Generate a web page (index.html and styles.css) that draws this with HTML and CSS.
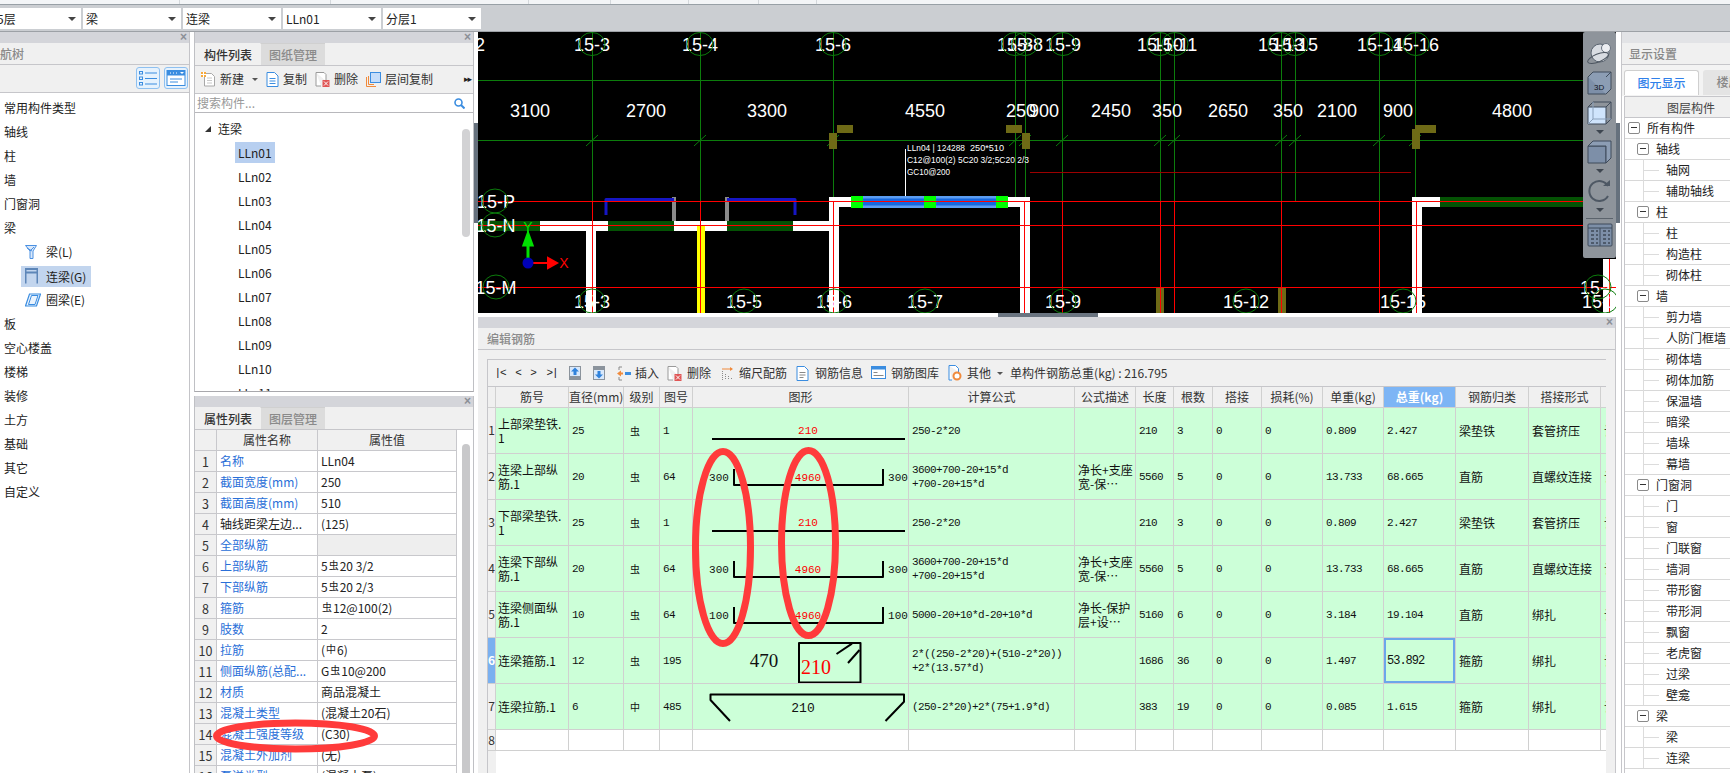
FILE: index.html
```html
<!DOCTYPE html>
<html lang="zh">
<head>
<meta charset="utf-8">
<title>编辑钢筋</title>
<link rel="stylesheet" href="styles.css">
</head>
<body>
<div class="app">
  <div class="topstrip"><i class="w180"></i><i class="w151"></i><i class="w198"></i><i class="w82"></i><i class="w78"></i><i class="w70"></i><i class="w58"></i></div>
  <div class="selbar">
    <div class="sel first"><span>5层</span></div>
    <div class="sel"><span>梁</span></div>
    <div class="sel"><span>连梁</span></div>
    <div class="sel"><span>LLn01</span></div>
    <div class="sel"><span>分层1</span></div>
  </div>
  <div class="main">
    <!-- 导航树 -->
    <section class="nav">
      <div class="phead"><span class="x">×</span></div>
      <div class="band navband">导航树</div>
      <div class="navtools">
        <span class="tbtn"><svg width="20" height="18" viewBox="0 0 20 18"><g fill="none" stroke="#3b8de0"><rect x="1.5" y="2.5" width="3" height="2.5"/><rect x="1.5" y="8" width="3" height="2.5"/><rect x="1.5" y="13.5" width="3" height="2.5"/><path d="M7 4h12M7 9.5h12M7 15h12"/></g></svg></span>
        <span class="tbtn"><svg width="20" height="18" viewBox="0 0 20 18"><rect x="1" y="1.5" width="18" height="15" fill="#fff" stroke="#3b8de0"/><rect x="1" y="1.5" width="18" height="5" fill="#3b8de0"/><path d="M4 4h1M7 4h1M10 4h1" stroke="#fff"/><path d="M14 3h4l-2 2z" fill="#fff"/><path d="M4 10h12M4 13h8" stroke="#3b8de0"/></svg></span>
      </div>
      <ul class="navlist">
        <li>常用构件类型</li>
        <li>轴线</li>
        <li>柱</li>
        <li>墙</li>
        <li>门窗洞</li>
        <li>梁</li>
        <li class="sub"><svg width="12" height="14" viewBox="0 0 12 14"><path d="M.5.5h11L8 6v7.500H5V6z" fill="#dbe9fa" stroke="#4a90e2"/><path d="M2 3l5 3M9 2L5 6" stroke="#4a90e2"/></svg><span>梁(L)</span></li>
        <li class="sub on"><svg width="13" height="16" viewBox="0 0 13 16"><path d="M.5 15.500V1h12v14.500" fill="none" stroke="#5d86b8" stroke-width="2"/><path d="M1 4.500h11" stroke="#5d86b8" stroke-width="2"/></svg><span>连梁(G)</span></li>
        <li class="sub"><svg width="16" height="14" viewBox="0 0 16 14"><path d="M4.500 1H15.500L11.500 13H.5z" fill="#eaf3fd" stroke="#3b8de0" stroke-width="1.200"/><path d="M6.500 2.500h6.500L10 11.500H3.500z" fill="none" stroke="#3b8de0"/></svg><span>圈梁(E)</span></li>
        <li>板</li>
        <li>空心楼盖</li>
        <li>楼梯</li>
        <li>装修</li>
        <li>土方</li>
        <li>基础</li>
        <li>其它</li>
        <li>自定义</li>
      </ul>
    </section>

    <!-- 构件列表 + 属性列表 -->
    <section class="mid">
      <div class="midtop">
        <div class="phead"><span class="x">×</span></div>
        <div class="tabs"><span class="tab on">构件列表</span><span class="tab">图纸管理</span></div>
        <div class="midtools">
          <span class="ti"><svg width="15" height="15" viewBox="0 0 15 15"><path d="M3.500 1.500h7l3 3v9.500h-10z" fill="#fff" stroke="#a8a8a8"/><path d="M6 6h5M6 8.500h5M6 11h5" stroke="#c8c8c8"/><path d="M0 0h5v5H0z" fill="#f7a93c"/><path d="M2.500 0v5M0 2.500h5" stroke="#fff"/></svg><span>新建</span><b class="caret"></b></span>
          <span class="ti"><svg width="13" height="15" viewBox="0 0 13 15"><path d="M1 .5h7.500l3.500 3.500v10.500H1z" fill="#fff" stroke="#3b8de0"/><path d="M3.500 6.500h6M3.500 9h6M3.500 11.500h6" stroke="#3b8de0"/></svg><span>复制</span></span>
          <span class="ti"><svg width="15" height="15" viewBox="0 0 15 15"><path d="M1 .5h8l2 2V9M6 14H1V.5" fill="#fff" stroke="#9a9a9a"/><rect x="7.500" y="8" width="7" height="7" fill="#e05555"/><path d="M9 9.500l4 4M13 9.500l-4 4" stroke="#fff"/></svg><span>删除</span></span>
          <span class="ti"><svg width="15" height="15" viewBox="0 0 15 15"><path d="M.5 5v9.500H10" fill="none" stroke="#f08a3c"/><path d="M2.500 4v8.500H8" fill="none" stroke="#f08a3c"/><rect x="4.500" y=".5" width="10" height="10" fill="#c5ddfa" stroke="#3b8de0"/></svg><span>层间复制</span></span>
          <span class="more">▸▸</span>
        </div>
        <div class="search"><span>搜索构件...</span><svg width="11" height="11" viewBox="0 0 11 11"><circle cx="4.500" cy="4.500" r="3.500" fill="none" stroke="#3b8de0" stroke-width="1.600"/><path d="M7 7l3.500 3.500" stroke="#3b8de0" stroke-width="2"/></svg></div>
        <div class="tree">
          <div class="troot"><b class="tri"></b>连梁</div>
          <div class="tleaf"><span class="on">LLn01</span></div>
          <div class="tleaf"><span>LLn02</span></div>
          <div class="tleaf"><span>LLn03</span></div>
          <div class="tleaf"><span>LLn04</span></div>
          <div class="tleaf"><span>LLn05</span></div>
          <div class="tleaf"><span>LLn06</span></div>
          <div class="tleaf"><span>LLn07</span></div>
          <div class="tleaf"><span>LLn08</span></div>
          <div class="tleaf"><span>LLn09</span></div>
          <div class="tleaf"><span>LLn10</span></div>
          <div class="tleaf"><span>LLn11</span></div>
          <span class="vthumb treethumb"></span>
        </div>
      </div>
      <div class="midbot">
        <div class="phead"><span class="x">×</span></div>
        <div class="tabs"><span class="tab on">属性列表</span><span class="tab">图层管理</span></div>
        <div class="propwrap">
          <table class="prop">
            <colgroup><col class="c1"><col class="c2"><col class="c3"></colgroup>
            <thead><tr><th></th><th>属性名称</th><th>属性值</th></tr></thead>
            <tbody>
              <tr><th>1</th><td class="bl">名称</td><td>LLn04</td></tr>
              <tr><th>2</th><td class="bl">截面宽度(mm)</td><td>250</td></tr>
              <tr><th>3</th><td class="bl">截面高度(mm)</td><td>510</td></tr>
              <tr><th>4</th><td>轴线距梁左边...</td><td>(125)</td></tr>
              <tr><th>5</th><td class="bl">全部纵筋</td><td class="gr"></td></tr>
              <tr><th>6</th><td class="bl">上部纵筋</td><td>5<span class="g">虫</span>20 3/2</td></tr>
              <tr><th>7</th><td class="bl">下部纵筋</td><td>5<span class="g">虫</span>20 2/3</td></tr>
              <tr><th>8</th><td class="bl">箍筋</td><td><span class="g">虫</span>12@100(2)</td></tr>
              <tr><th>9</th><td class="bl">肢数</td><td>2</td></tr>
              <tr><th>10</th><td class="bl">拉筋</td><td>(<span class="g">中</span>6)</td></tr>
              <tr><th>11</th><td class="bl">侧面纵筋(总配...</td><td>G<span class="g">虫</span>10@200</td></tr>
              <tr><th>12</th><td class="bl">材质</td><td>商品混凝土</td></tr>
              <tr><th>13</th><td class="bl">混凝土类型</td><td>(混凝土20石)</td></tr>
              <tr><th>14</th><td class="bl">混凝土强度等级</td><td>(C30)</td></tr>
              <tr><th>15</th><td class="bl">混凝土外加剂</td><td>(无)</td></tr>
              <tr><th>16</th><td class="bl">泵送类型</td><td>(混凝土泵)</td></tr>
            </tbody>
          </table>
          <div class="proptrack"><span class="vthumb"></span></div>
        </div>
      </div>
    </section>

    <div class="split"><span class="grip"></span></div>

    <!-- 绘图区 + 编辑钢筋 -->
    <section class="center">
      <div class="canvas">
        <svg class="cad" width="1138" height="281" viewBox="478 32 1138 281">
          <rect x="478" y="32" width="1138" height="281" fill="#000"/>
          <g class="gl">
            <path d="M478 80.500H1583M478 140.500H1583"/>
            <path d="M592.500 32V201M700.500 32V201M833.500 32V201M1015.500 32V200M1025.500 32V200M1062.500 32V201M1160.500 32V201M1174.500 32V201M1281.500 32V201M1295.500 32V201M1379.500 32V201M1415.500 32V201"/>
            <path d="M586 146l12-11M694 146l12-11M827 146l12-11M1009 146l12-11M1019 146l12-11M1056 146l12-11M1154 146l12-11M1168 146l12-11M1275 146l12-11M1289 146l12-11M1373 146l12-11M1409 146l12-11"/>
          </g>
          <g class="ol">
            <rect x="837" y="125" width="16" height="8"/><rect x="829" y="133" width="8" height="16"/>
            <rect x="1006" y="125" width="16" height="8"/><rect x="1022" y="133" width="8" height="16"/>
            <rect x="1415" y="125" width="21" height="8"/><rect x="1412" y="129" width="8" height="20"/>
            <rect x="1156" y="287" width="8" height="26"/><rect x="1278" y="287" width="8" height="26"/>
          </g>
          <g class="wh">
            <rect x="478" y="221" width="351" height="10"/>
            <rect x="586" y="231" width="10" height="82"/>
            <rect x="829" y="197" width="10" height="116"/>
            <rect x="829" y="197" width="201" height="10"/>
            <rect x="1020" y="197" width="10" height="116"/>
            <rect x="1412" y="197" width="10" height="116"/>
            <rect x="1412" y="197" width="28" height="10"/>
            <rect x="1603" y="259" width="13" height="54"/>
          </g>
          <g class="dg">
            <rect x="478" y="221" width="62" height="10"/>
            <rect x="608" y="221" width="66" height="10"/>
            <rect x="727" y="221" width="66" height="10"/>
            <rect x="1440" y="197" width="143" height="10"/>
          </g>
          <rect x="697" y="226" width="8" height="87" fill="#ff0"/>
          <g class="gy"><rect x="672" y="197" width="4" height="24"/><rect x="725" y="197" width="4" height="24"/></g>
          <g class="nv">
            <path d="M606 215V199.500H674"/>
            <path d="M727 199.500H795V215"/>
          </g>
          <rect x="851" y="196" width="157" height="12" fill="#5b9df2"/>
          <rect x="851" y="198.500" width="157" height="7" fill="#1668e0"/>
          <g class="gn"><rect x="851" y="196" width="12" height="12"/><rect x="924" y="196" width="12" height="12"/><rect x="996" y="196" width="12" height="12"/></g>
          <path d="M905.500 149V196" stroke="#fff" fill="none"/>
          <g class="rd">
            <path d="M478 201.500H1616M478 225.500H1616M478 287.500H1616"/>
            <path d="M592.500 201V313M700.500 201V313M833.500 201V313M1024.500 201V313M1062.500 201V313M1160.500 201V313M1174.500 201V313M1281.500 201V313M1379.500 201V313M1416.500 201V313M1609.500 259V313"/>
          </g>
          <path d="M1030 172.500H1411" stroke="#9c0000" fill="none"/>
          <g class="lb">
            <text x="907" y="151" textLength="58" lengthAdjust="spacingAndGlyphs">LLn04 | 124288</text>
            <text x="970" y="151" textLength="34" lengthAdjust="spacingAndGlyphs">250*510</text>
            <text x="907" y="163" textLength="122" lengthAdjust="spacingAndGlyphs">C12@100(2) 5C20 3/2;5C20 2/3</text>
            <text x="907" y="175" textLength="43" lengthAdjust="spacingAndGlyphs">GC10@200</text>
          </g>
          <g class="ax">
            <text x="485" y="51" text-anchor="end">15-2</text>
            <text x="592" y="51">15-3</text><text x="700" y="51">15-4</text><text x="833" y="51">15-6</text>
            <text x="1015" y="51">15-8</text><text x="1025" y="51">15-8</text><text x="1063" y="51">15-9</text>
            <text x="1160" y="51">15-10</text><text x="1175" y="51">15-11</text>
            <text x="1281" y="51">15-13</text><text x="1295" y="51">15-15</text>
            <text x="1380" y="51">15-14</text><text x="1416" y="51">15-16</text>
            <text x="530" y="117">3100</text><text x="646" y="117">2700</text><text x="767" y="117">3300</text><text x="925" y="117">4550</text>
            <text x="1021" y="117">250</text><text x="1044" y="117">900</text><text x="1111" y="117">2450</text><text x="1167" y="117">350</text>
            <text x="1228" y="117">2650</text><text x="1288" y="117">350</text><text x="1337" y="117">2100</text><text x="1398" y="117">900</text><text x="1512" y="117">4800</text>
            <text x="496" y="208">15-P</text><text x="496" y="232">15-N</text><text x="496" y="294">15-M</text>
            <text x="592" y="308">15-3</text><text x="744" y="308">15-5</text><text x="834" y="308">15-6</text><text x="925" y="308">15-7</text>
            <text x="1063" y="308">15-9</text><text x="1246" y="308">15-12</text><text x="1403" y="308">15-15</text>
            <text x="1598" y="294">15-L</text><text x="1605" y="308">15-16</text>
          </g>
          <g class="bb">
            <ellipse cx="592" cy="44" rx="13" ry="11.500"/><ellipse cx="700" cy="44" rx="13" ry="11.500"/><ellipse cx="833" cy="44" rx="13" ry="11.500"/>
            <ellipse cx="1015" cy="44" rx="13" ry="11.500"/><ellipse cx="1025" cy="44" rx="13" ry="11.500"/><ellipse cx="1063" cy="44" rx="13" ry="11.500"/>
            <ellipse cx="1160" cy="44" rx="13" ry="11.500"/><ellipse cx="1175" cy="44" rx="13" ry="11.500"/><ellipse cx="1281" cy="44" rx="13" ry="11.500"/>
            <ellipse cx="1295" cy="44" rx="13" ry="11.500"/><ellipse cx="1380" cy="44" rx="13" ry="11.500"/><ellipse cx="1416" cy="44" rx="13" ry="11.500"/>
            <ellipse cx="495" cy="201" rx="13" ry="12"/><ellipse cx="495" cy="225" rx="13" ry="12"/><ellipse cx="496" cy="287" rx="13" ry="12"/>
            <ellipse cx="592" cy="301" rx="13" ry="12"/><ellipse cx="744" cy="301" rx="13" ry="12"/><ellipse cx="834" cy="301" rx="13" ry="12"/><ellipse cx="925" cy="301" rx="13" ry="12"/>
            <ellipse cx="1063" cy="301" rx="13" ry="12"/><ellipse cx="1246" cy="301" rx="13" ry="12"/><ellipse cx="1403" cy="301" rx="13" ry="12"/>
            <ellipse cx="1598" cy="287" rx="13" ry="12"/><ellipse cx="1605" cy="301" rx="13" ry="12"/>
          </g>
          <path d="M528 263V245h-4l4-11 4 11h-4z" fill="#00e000" stroke="#00e000" stroke-width="3"/>
          <path d="M528 263h20v-5l9 5-9 5v-5z" fill="#f00" stroke="#f00" stroke-width="2"/>
          <circle cx="528" cy="263" r="5.500" fill="#0000b8"/>
          <text class="gy-l" x="528" y="232">Y</text>
          <text class="rx-l" x="564" y="268">X</text>
        </svg>
        <div class="viewbar">
          <svg width="26" height="24" viewBox="0 0 26 24"><ellipse cx="13" cy="12" rx="9" ry="9" fill="#d8dce2" stroke="#5a6470"/><circle cx="19" cy="7" r="4.500" fill="#eceef2" stroke="#6a7480"/><ellipse cx="11" cy="17" rx="11" ry="4" fill="none" stroke="#4c5560" transform="rotate(-22 11 17)"/></svg>
          <svg width="26" height="24" viewBox="0 0 26 24"><path d="M1 6h18v17H1z" fill="#7d8fa8" stroke="#3e4a5a"/><path d="M1 6l5-5h18v17l-5 5M19 6l5-5" fill="#8c9db4" stroke="#3e4a5a"/><text class="t3d" x="7" y="19">3D</text></svg>
          <svg width="26" height="24" viewBox="0 0 26 24"><path d="M1 6h18v17H1z" fill="#cfe4fc" stroke="#3e4a5a"/><path d="M1 6l5-5h18v17l-5 5M19 6l5-5" fill="none" stroke="#3e4a5a"/><path d="M6 1v17h18M6 18l-5 5" fill="none" stroke="#8aa0ba"/></svg>
          <b class="dn"></b>
          <svg width="26" height="24" viewBox="0 0 26 24"><path d="M1 6h18v17H1z" fill="#7d8fa8" stroke="#3e4a5a"/><path d="M1 6l5-5h18v17l-5 5V6z" fill="#8c9db4" stroke="#3e4a5a"/></svg>
          <b class="dn"></b>
          <svg width="26" height="24" viewBox="0 0 26 24"><path d="M21 17a10 10 0 1 1 0-10" fill="none" stroke="#4e5864" stroke-width="2"/><path d="M16 7h7V1z" fill="#4e5864"/></svg>
          <b class="dn"></b>
          <i class="vsep"></i>
          <svg width="26" height="24" viewBox="0 0 26 24"><rect x="1" y="1" width="24" height="22" rx="1" fill="#7d8fa8" stroke="#3e4a5a"/><path d="M1 5h24M13 5v18" stroke="#3e4a5a"/><path d="M4 8h3M4 12h3M4 16h3M4 20h3M9 8h2M9 12h2M9 16h2M9 20h2M16 8h3M16 12h3M16 16h3M16 20h3M21 8h2M21 12h2M21 16h2M21 20h2" stroke="#20262e"/></svg>
        </div>
      </div>
      <div class="hscroll"><span class="hthumb"></span></div>
      <div class="editor">
        <div class="phead"><span class="x">×</span></div>
        <div class="band edband">编辑钢筋</div>
        <div class="edbody">
          <div class="box">
            <div class="edtools">
              <span class="nvbtn wide">|&lt;</span><span class="nvbtn nv2">&lt;</span><span class="nvbtn">&gt;</span><span class="nvbtn wide nv4">&gt;|</span>
              <svg class="ic up" width="12" height="14" viewBox="0 0 12 14"><rect width="12" height="14" fill="#8b939c"/><rect x="1" y="1" width="10" height="9" fill="#d8e8fb"/><path d="M6 1.500l4 4H7.500V9h-3V5.500H2z" fill="#2f82dc"/></svg>
              <svg class="ic dnb" width="12" height="14" viewBox="0 0 12 14"><rect width="12" height="14" fill="#8b939c"/><rect x="1" y="4" width="10" height="9" fill="#d8e8fb"/><path d="M6 12.500l4-4H7.500V5h-3v3.500H2z" fill="#2f82dc"/></svg>
              <span class="ti e-ins"><svg width="14" height="15" viewBox="0 0 14 15"><path d="M5 1h-3v3M5 14H2v-3M5 7.500H3" fill="none" stroke="#8a8a8a"/><path d="M0 7.500l4-3v6z" fill="#f08a3c"/><path d="M3 7.500h3" stroke="#f08a3c" stroke-width="2"/><rect x="8" y="6" width="6" height="3" fill="#3b8de0"/></svg><span>插入</span></span>
              <span class="ti e-del"><svg width="15" height="15" viewBox="0 0 15 15"><path d="M1 .5h8l2 2V9M6 14H1V.5" fill="#fff" stroke="#9a9a9a"/><rect x="7.500" y="8" width="7" height="7" fill="#e05555"/><path d="M9 9.500l4 4M13 9.500l-4 4" stroke="#fff"/></svg><span>删除</span></span>
              <span class="ti e-sca"><svg width="13" height="14" viewBox="0 0 13 14"><path d="M1 3h10" stroke="#f08a3c"/><path d="M12 3l-3-2v4z" fill="#f08a3c"/><path d="M1.500 5v9M4.500 8v6M7.500 10v4M10.500 12v2" stroke="#8a8a8a" stroke-dasharray="1 1"/></svg><span>缩尺配筋</span></span>
              <span class="ti e-inf"><svg width="13" height="15" viewBox="0 0 13 15"><path d="M1 .5h7.500l3.500 3.500v10.500H1z" fill="#fff" stroke="#3b8de0"/><path d="M3.500 6.500h6M3.500 9h6M3.500 11.500h4" stroke="#888"/></svg><span>钢筋信息</span></span>
              <span class="ti e-lib"><svg width="15" height="13" viewBox="0 0 15 13"><rect x=".5" y=".5" width="14" height="12" fill="#fff" stroke="#3b8de0"/><rect x="0" y="0" width="15" height="3.500" fill="#3b8de0"/><path d="M2.500 6.500h4M2.500 9.500h10" stroke="#888"/></svg><span>钢筋图库</span></span>
              <span class="ti e-oth"><svg width="14" height="16" viewBox="0 0 14 16"><path d="M1 .5h6.500l3 3V7M4 15H1V.5" fill="#fff" stroke="#3b8de0"/><circle cx="9" cy="11" r="3.500" fill="#fff" stroke="#f08a3c" stroke-width="2"/></svg><span>其他</span><b class="caret"></b></span>
              <span class="total">单构件钢筋总重(kg) : 216.795</span>
            </div>
            <table class="rebar">
              <colgroup><col class="k0"><col class="k1"><col class="k2"><col class="k3"><col class="k4"><col class="k5"><col class="k6"><col class="k7"><col class="k8"><col class="k9"><col class="k10"><col class="k11"><col class="k12"><col class="k13"><col class="k14"><col class="k15"><col class="k16"></colgroup>
              <thead>
                <tr><th></th><th>筋号</th><th>直径(mm)</th><th>级别</th><th>图号</th><th>图形</th><th>计算公式</th><th>公式描述</th><th>长度</th><th>根数</th><th>搭接</th><th>损耗(%)</th><th>单重(kg)</th><th class="hot">总重(kg)</th><th>钢筋归类</th><th>搭接形式</th><th>钢筋类型</th></tr>
              </thead>
              <tbody>
                <tr>
                  <th>1</th><td>上部梁垫铁.<br>1</td><td class="m">25</td><td class="gc">虫</td><td class="m">1</td>
                  <td class="fig"><svg class="sh" width="215" height="45" viewBox="0 0 215 45"><text class="r" x="115" y="26">210</text><path class="ln" d="M19 31H212"/></svg></td>
                  <td class="m">250-2*20</td><td></td><td class="m">210</td><td class="m">3</td><td class="m">0</td><td class="m">0</td><td class="m">0.809</td><td class="m">2.427</td><td>梁垫铁</td><td>套管挤压</td><td>计算设置</td>
                </tr>
                <tr>
                  <th>2</th><td>连梁上部纵<br>筋.1</td><td class="m">20</td><td class="gc">虫</td><td class="m">64</td>
                  <td class="fig"><svg class="sh" width="215" height="45" viewBox="0 0 215 45"><text class="k" x="26" y="27">300</text><text class="r" x="115" y="27">4960</text><text class="k" x="205" y="27">300</text><path class="ln" d="M41 15V31H190V15"/></svg></td>
                  <td class="m">3600+700-20+15*d<br>+700-20+15*d</td><td>净长+支座<br>宽-保…</td><td class="m">5560</td><td class="m">5</td><td class="m">0</td><td class="m">0</td><td class="m">13.733</td><td class="m">68.665</td><td>直筋</td><td>直螺纹连接</td><td>计算设置</td>
                </tr>
                <tr>
                  <th>3</th><td>下部梁垫铁.<br>1</td><td class="m">25</td><td class="gc">虫</td><td class="m">1</td>
                  <td class="fig"><svg class="sh" width="215" height="45" viewBox="0 0 215 45"><text class="r" x="115" y="26">210</text><path class="ln" d="M19 31H212"/></svg></td>
                  <td class="m">250-2*20</td><td></td><td class="m">210</td><td class="m">3</td><td class="m">0</td><td class="m">0</td><td class="m">0.809</td><td class="m">2.427</td><td>梁垫铁</td><td>套管挤压</td><td>计算设置</td>
                </tr>
                <tr>
                  <th>4</th><td>连梁下部纵<br>筋.1</td><td class="m">20</td><td class="gc">虫</td><td class="m">64</td>
                  <td class="fig"><svg class="sh" width="215" height="45" viewBox="0 0 215 45"><text class="k" x="26" y="27">300</text><text class="r" x="115" y="27">4960</text><text class="k" x="205" y="27">300</text><path class="ln" d="M41 15V31H190V15"/></svg></td>
                  <td class="m">3600+700-20+15*d<br>+700-20+15*d</td><td>净长+支座<br>宽-保…</td><td class="m">5560</td><td class="m">5</td><td class="m">0</td><td class="m">0</td><td class="m">13.733</td><td class="m">68.665</td><td>直筋</td><td>直螺纹连接</td><td>计算设置</td>
                </tr>
                <tr>
                  <th>5</th><td>连梁侧面纵<br>筋.1</td><td class="m">10</td><td class="gc">虫</td><td class="m">64</td>
                  <td class="fig"><svg class="sh" width="215" height="45" viewBox="0 0 215 45"><text class="k" x="26" y="27">100</text><text class="r" x="115" y="27">4960</text><text class="k" x="205" y="27">100</text><path class="ln" d="M41 15V31H190V15"/></svg></td>
                  <td class="m">5000-20+10*d-20+10*d</td><td>净长-保护<br>层+设…</td><td class="m">5160</td><td class="m">6</td><td class="m">0</td><td class="m">0</td><td class="m">3.184</td><td class="m">19.104</td><td>直筋</td><td>绑扎</td><td>计算设置</td>
                </tr>
                <tr>
                  <th class="act">6</th><td>连梁箍筋.1</td><td class="m">12</td><td class="gc">虫</td><td class="m">195</td>
                  <td class="fig"><svg class="sh" width="215" height="45" viewBox="0 0 215 45"><text class="s1" x="71" y="29">470</text><rect class="ln" x="106" y="5" width="61.500" height="39.500"/><path class="ln" d="M143.500 16L159 5.700M155 25L166.500 12"/><text class="s2" x="123" y="36">210</text></svg></td>
                  <td class="m">2*((250-2*20)+(510-2*20))<br>+2*(13.57*d)</td><td></td><td class="m">1686</td><td class="m">36</td><td class="m">0</td><td class="m">0</td><td class="m">1.497</td><td class="m sel6">53.892</td><td>箍筋</td><td>绑扎</td><td>计算设置</td>
                </tr>
                <tr>
                  <th>7</th><td>连梁拉筋.1</td><td class="m">6</td><td class="gc">中</td><td class="m">485</td>
                  <td class="fig"><svg class="sh" width="215" height="45" viewBox="0 0 215 45"><path class="ln" d="M37 37L17.500 16V10.500H211V17.700L192.500 37"/><text class="s3" x="110" y="28">210</text></svg></td>
                  <td class="m">(250-2*20)+2*(75+1.9*d)</td><td></td><td class="m">383</td><td class="m">19</td><td class="m">0</td><td class="m">0</td><td class="m">0.085</td><td class="m">1.615</td><td>箍筋</td><td>绑扎</td><td>计算设置</td>
                </tr>
                <tr class="empty"><th>8</th><td></td><td></td><td></td><td></td><td></td><td></td><td></td><td></td><td></td><td></td><td></td><td></td><td></td><td></td><td></td><td></td></tr>
              </tbody>
            </table>
          </div>
        </div>
      </div>
    </section>

    <div class="split"><span class="grip"></span></div>

    <!-- 显示设置 -->
    <section class="disp">
      <div class="phead lite"></div>
      <div class="band dispband">显示设置</div>
      <div class="dtabs"><span class="dtab on">图元显示</span><span class="dtab">楼层显示</span></div>
      <div class="layers">
        <div class="lhead">图层构件</div>
        <div class="lr t0"><b class="mn"></b>所有构件</div>
        <div class="lr t1"><b class="mn"></b>轴线</div>
        <div class="lr t2">轴网</div>
        <div class="lr t2">辅助轴线</div>
        <div class="lr t1"><b class="mn"></b>柱</div>
        <div class="lr t2">柱</div>
        <div class="lr t2">构造柱</div>
        <div class="lr t2">砌体柱</div>
        <div class="lr t1"><b class="mn"></b>墙</div>
        <div class="lr t2">剪力墙</div>
        <div class="lr t2">人防门框墙</div>
        <div class="lr t2">砌体墙</div>
        <div class="lr t2">砌体加筋</div>
        <div class="lr t2">保温墙</div>
        <div class="lr t2">暗梁</div>
        <div class="lr t2">墙垛</div>
        <div class="lr t2">幕墙</div>
        <div class="lr t1"><b class="mn"></b>门窗洞</div>
        <div class="lr t2">门</div>
        <div class="lr t2">窗</div>
        <div class="lr t2">门联窗</div>
        <div class="lr t2">墙洞</div>
        <div class="lr t2">带形窗</div>
        <div class="lr t2">带形洞</div>
        <div class="lr t2">飘窗</div>
        <div class="lr t2">老虎窗</div>
        <div class="lr t2">过梁</div>
        <div class="lr t2">壁龛</div>
        <div class="lr t1"><b class="mn"></b>梁</div>
        <div class="lr t2">梁</div>
        <div class="lr t2">连梁</div>
      </div>
    </section>
  </div>
</div>

<svg class="marks" width="1730" height="773" viewBox="0 0 1730 773">
  <ellipse cx="723" cy="547.500" rx="27.500" ry="96"/>
  <ellipse cx="808.500" cy="543" rx="27" ry="92.500"/>
  <ellipse cx="295.500" cy="736" rx="79" ry="13"/>
</svg>
</body>
</html>
```

FILE: styles.css
```css
* { box-sizing: border-box; }
html, body { margin: 0; padding: 0; }
body {
  width: 1730px; height: 773px; overflow: hidden; background: #fff; position: relative;
  font: 12px/1.2 "Noto Sans CJK SC", "Noto Sans", sans-serif; color: #222;
}
.app { display: flex; flex-direction: column; height: 773px; }

/* top */
.topstrip { height: 5px; display: flex; background: #f3f5f7; border-bottom: 1px solid #98a0a6; }
.topstrip i { display: block; height: 4px; border-right: 1px solid #d4d8dc; }
.w180 { width: 180px; } .w151 { width: 151px; } .w198 { width: 198px; } .w82 { width: 82px; }
.w78 { width: 78px; } .w70 { width: 70px; } .w58 { width: 58px; }
.selbar { height: 27px; background: #cbced2; border-bottom: 1px solid #9da1a6; display: flex; gap: 2px; padding-top: 3px; }
.sel { width: 98px; height: 21px; background: #fff; position: relative; padding-left: 3px; line-height: 21px; overflow: hidden; }
.sel.first { width: 81px; padding-left: 0; text-indent: -3px; }
.sel::after { content: ""; position: absolute; right: 5px; top: 9px; border: 4px solid transparent; border-top: 4px solid #444; border-bottom: 0; }

.main { flex: 1; display: flex; min-height: 0; }
.phead { height: 11px; background: #d4d5da; position: relative; flex: none; }
.phead.lite { background: #e2e3e6; }
.x { position: absolute; right: 2px; top: -2px; font: 700 12px/14px "Liberation Sans", sans-serif; color: #8b8f96; }
.band { height: 22px; background: #f0f0f0; border-bottom: 1px solid #c6c6ca; line-height: 21px; color: #8a8a8a; font-weight: 500; flex: none; }

/* nav */
.nav { width: 190px; border-right: 1px solid #c4c4c8; display: flex; flex-direction: column; flex: none; overflow: hidden; }
.navband { text-indent: -12px; }
.navtools { height: 28px; background: #f0f0f0; border-bottom: 1px solid #c6c6ca; display: flex; justify-content: flex-end; gap: 4px; padding: 2px 1px 0 0; flex: none; }
.tbtn { width: 24px; height: 22px; border: 1px solid #8ec0f0; border-radius: 3px; background: #e6f2fd; display: flex; align-items: center; justify-content: center; }
.navlist { list-style: none; margin: 3px 0 0; padding: 0; }
.navlist li { height: 24px; line-height: 24px; padding-left: 4px; white-space: nowrap; }
.navlist .sub { margin-left: 21px; padding-left: 0; width: 70px; position: relative; display: flex; align-items: center; }
.navlist .sub svg { position: absolute; left: 4px; top: 5px; }
.navlist .sub span { margin-left: 25px; }
.navlist .on { background: #c2d5ee; background-clip: content-box; padding: 2px 0 1px; line-height: 21px; }
.navlist .on svg { top: 4px; }

/* middle */
.mid { width: 280px; margin-left: 4px; display: flex; flex-direction: column; flex: none; }
.midtop { height: 360px; display: flex; flex-direction: column; border-left: 1px solid #bfc0c4; border-right: 1px solid #bfc0c4; border-bottom: 1px solid #a8a8ac; }
.midbot { margin-top: 4px; flex: 1; min-height: 0; display: flex; flex-direction: column; border-left: 1px solid #bfc0c4; border-right: 1px solid #bfc0c4; }
.tabs { height: 23px; background: #f0f0f0; border-bottom: 1px solid #c6c6ca; display: flex; flex: none; }
.tab { width: 65px; background: #dcdcdc; color: #8a8a8a; line-height: 22px; text-align: center; font-weight: 500; height: 22px; border-left: 1px solid #f0f0f0; border-top: 1px solid #d0d0d0; }
.tab.on { background: #f0f0f0; color: #333; border-top: 1px solid #f0f0f0; }
.midtools { height: 28px; background: #f0f0f0; border-bottom: 1px solid #c6c6ca; display: flex; align-items: center; padding-left: 6px; gap: 8px; position: relative; flex: none; }
.ti { display: inline-flex; align-items: center; gap: 4px; color: #333; white-space: nowrap; }
.caret { display: inline-block; border: 3px solid transparent; border-top: 3px solid #555; border-bottom: 0; margin-left: 4px; }
.more { position: absolute; right: 2px; top: 6px; font: 9px/14px "DejaVu Sans", sans-serif; letter-spacing: -1px; color: #222; }
.search { height: 19px; border-bottom: 1px solid #b8b8bc; display: flex; justify-content: space-between; align-items: center; padding: 0 8px 0 2px; color: #999; flex: none; }
.tree { flex: 1; position: relative; overflow: hidden; padding-top: 5px; }
.troot { height: 24px; line-height: 22px; padding-left: 23px; position: relative; }
.tri { position: absolute; left: 10px; top: 8px; width: 0; height: 0; border-left: 6px solid transparent; border-bottom: 6px solid #333; }
.tleaf { height: 24px; padding-left: 40px; line-height: 21px; }
.tleaf span { display: inline-block; width: 40px; height: 21px; padding-left: 3px; }
.tleaf .on { background: #b7cff0; }
.vthumb { display: block; width: 8px; background: #d2d2d4; border-radius: 4px; }
.treethumb { position: absolute; right: 3px; top: 16px; height: 108px; }

.propwrap { flex: 1; display: flex; min-height: 0; overflow: hidden; }
.prop { border-collapse: separate; border-spacing: 0; table-layout: fixed; width: 262px; flex: none; align-self: flex-start; }
.c1 { width: 22px; } .c2 { width: 101px; } .c3 { width: 139px; }
.prop th, .prop td { height: 21px; padding: 1px 0 0; border-right: 1px solid #c8c8cc; border-bottom: 1px solid #c8c8cc; font-weight: 400; white-space: nowrap; overflow: hidden; }
.prop th { background: #f0f0f0; color: #333; text-align: center; font-size: 12.500px; }
.prop thead th { font-size: 12px; }
.prop td { padding-left: 3px; }
.prop td.bl { color: #2a6fd8; }
.prop td.gr { background: #eee; }
.g { font-size: 10px; vertical-align: 2px; margin: 0 1px; }
.proptrack { flex: 1; padding: 14px 0 0 5px; background: #fff; }
.proptrack .vthumb { height: 400px; background: #c8c8ca; }

/* splitters */
.split { width: 4px; flex: none; background: #fff; padding-top: 91px; }
.grip { display: block; height: 100px; background: #66717d; }

/* canvas */
.center { width: 1138px; flex: none; display: flex; flex-direction: column; }
.canvas { height: 281px; position: relative; flex: none; }
.cad { display: block; }
.gl path { fill: none; stroke: #0c7c0c; stroke-width: 1; }
.bb ellipse { fill: none; stroke: #0c7c0c; }
.ol rect { fill: #6e6a16; }
.wh rect { fill: #fff; }
.dg rect { fill: #045204; }
.gy rect { fill: #8a8a8a; }
.nv path { fill: none; stroke: #1616c4; stroke-width: 3; stroke-linejoin: round; }
.gn rect { fill: #00ff00; }
.rd path { fill: none; stroke: #f00; stroke-width: 1; }
.ax text { fill: #fff; font: 18px "Liberation Sans", sans-serif; text-anchor: middle; }
.ax text[text-anchor="end"] { text-anchor: end; }
.lb text { fill: #fff; font: 9px "Liberation Sans", sans-serif; }
.gy-l { fill: #00e000; font: 14px "Liberation Sans", sans-serif; text-anchor: middle; }
.rx-l { fill: #f00; font: 14px "Liberation Sans", sans-serif; text-anchor: middle; }
.t3d { fill: #10161e; font: 8px "Liberation Sans", sans-serif; }
.viewbar { position: absolute; right: 0; top: 0; width: 33px; height: 226px; background: #8e949b; border-radius: 2px; display: flex; flex-direction: column; align-items: center; padding-top: 9px; }
.viewbar svg { flex: none; margin-bottom: 6px; }
.dn { flex: none; width: 0; height: 0; border: 4px solid transparent; border-top: 4px solid #3e4650; border-bottom: 0; margin: -1px 0 6px; }
.vsep { display: block; width: 27px; height: 1px; background: #5b636c; margin: 0 0 4px; flex: none; }
.hscroll { height: 4px; background: #fff; position: relative; flex: none; }
.hthumb { position: absolute; left: 520px; width: 100px; height: 4px; background: #6a7480; }

/* editor */
.editor { flex: 1; min-height: 0; display: flex; flex-direction: column; border-right: 1px solid #c6c6ca; }
.edband { text-indent: 9px; }
.edbody { flex: 1; min-height: 0; background: #f0f0f0; padding: 9px 9px 0 9px; }
.box { background: linear-gradient(to right, #f0f0f0 8px, #fff 8px); border-top: 1px solid #c6c6ca; border-left: 1px solid #c6c6ca; height: 100%; overflow: hidden; width: 1119px; }
.edtools { height: 27px; background: #f0f0f0; border-bottom: 1px solid #c6c6ca; display: flex; align-items: center; padding-left: 6px; }
.nvbtn { width: 15px; flex: none; text-align: center; font: 11px "Liberation Mono", monospace; color: #222; white-space: nowrap; }
.nvbtn.wide { width: 12px; letter-spacing: -1px; }
.nv2, .nv4 { margin-left: 5px; }
.ic.up { margin-left: 11px; }
.ic.dnb { margin-left: 12px; }
.e-ins { margin-left: 12px; gap: 4px; }
.e-del { margin-left: 8px; gap: 5px; }
.e-sca { margin-left: 10px; gap: 5px; }
.e-inf { margin-left: 9px; gap: 6px; }
.e-lib { margin-left: 8px; gap: 5px; }
.e-oth { margin-left: 9px; gap: 5px; }
.e-oth .caret { margin-left: 1px; }
.total { margin-left: 7px; color: #333; white-space: nowrap; }

.rebar { border-collapse: separate; border-spacing: 0; table-layout: fixed; width: 1173px; }
.k0 { width: 8px; } .k1 { width: 73px; } .k2 { width: 55px; } .k3 { width: 36px; } .k4 { width: 33px; } .k5 { width: 216px; }
.k6 { width: 166px; } .k7 { width: 61px; } .k8 { width: 38px; } .k9 { width: 39px; } .k10 { width: 49px; } .k11 { width: 61px; }
.k12 { width: 61px; } .k13 { width: 72px; } .k14 { width: 73px; } .k15 { width: 72px; } .k16 { width: 60px; }
.rebar th, .rebar td { padding: 0; border-right: 1px solid #d0d0d0; border-bottom: 1px solid #d0d0d0; overflow: hidden; white-space: nowrap; font-weight: 400; }
.rebar thead th { height: 21px; background: #f0f0f0; text-align: center; color: #333; padding-top: 1px; }
.rebar thead th.hot { background: #7db5f5; color: #fff; font-weight: 700; }
.rebar tbody th { background: #f0f0f0; text-align: center; color: #333; font-size: 12px; }
.rebar tbody th.act { background: #7ab0f0; color: #fff; font-weight: 700; }
.rebar td { height: 46px; background: #ccffd8; padding-left: 3px; line-height: 14px; color: #111; }
.rebar td:nth-child(2) { padding-left: 2px; }
.rebar .m { font: 11px/14px "Liberation Mono", monospace; letter-spacing: -.6px; }
.rebar .gc { font-size: 10px; padding-left: 6px; }
.rebar .fig { padding: 0; }
.rebar .sel6 { box-shadow: inset 0 0 0 2px #6ca6ea; font: 12px/14px "Liberation Mono", monospace; letter-spacing: -1px; }
.rebar .empty td { height: 21px; background: #fff; }
.rebar .empty th { height: 21px; }
.sh { display: block; }
.sh text { text-anchor: middle; }
.ln { fill: none; stroke: #000; stroke-width: 2; stroke-linejoin: round; }
.r { fill: #f00; font: 11px "Liberation Mono", monospace; }
.k { fill: #111; font: 11px "Liberation Mono", monospace; }
.s1 { fill: #111; font: 19px "Liberation Serif", serif; }
.s2 { fill: #f00; font: 20px "Liberation Serif", serif; }
.s3 { fill: #111; font: 13px "Liberation Mono", monospace; }

/* display panel */
.disp { flex: 1; min-width: 0; margin-left: 1px; border-left: 1px solid #c6c6ca; display: flex; flex-direction: column; overflow: hidden; }
.dispband { color: #888; text-indent: 7px; }
.dtabs { height: 31px; background: #f3f3f3; padding: 5px 0 0 2px; display: flex; gap: 4px; flex: none; }
.dtab { width: 75px; height: 25px; line-height: 24px; text-align: center; background: #e4e4e4; color: #888; border-radius: 3px 3px 0 0; white-space: nowrap; font-weight: 500; flex: none; }
.dtab.on { background: #fff; color: #2f80ea; border: 1px solid #cfcfcf; border-bottom: 0; }
.layers { flex: 1; min-height: 0; margin-left: 2px; border-left: 1px solid #c6c6ca; overflow: hidden; }
.lhead { height: 22px; background: #f0f0f0; text-align: center; line-height: 21px; border-bottom: 1px solid #c6c6ca; border-top: 1px solid #c6c6ca; width: 132px; color: #444; }
.lr { height: 21px; line-height: 20px; border-bottom: 1px solid #d8d8d8; display: flex; align-items: center; position: relative; white-space: nowrap; }
.mn { width: 12px; height: 12px; border: 1px solid #8a8a8a; border-radius: 2px; margin-right: 7px; position: relative; background: #fff; flex: none; }
.mn::after { content: ""; position: absolute; left: 2px; right: 2px; top: 4px; height: 1px; background: #333; }
.t0 { padding-left: 3px; }
.t1 { padding-left: 12px; }
.t2 { padding-left: 41px; }
.t2::before { content: ""; position: absolute; left: 19px; width: 15px; top: 10px; height: 1px; background: #dcdcdc; }
.t2::after { content: ""; position: absolute; left: 18px; width: 1px; top: -1px; height: 21px; background: #dcdcdc; }

.marks { position: absolute; left: 0; top: 0; pointer-events: none; }
.marks ellipse { fill: none; stroke: #ff3b3b; stroke-width: 7; }
```
